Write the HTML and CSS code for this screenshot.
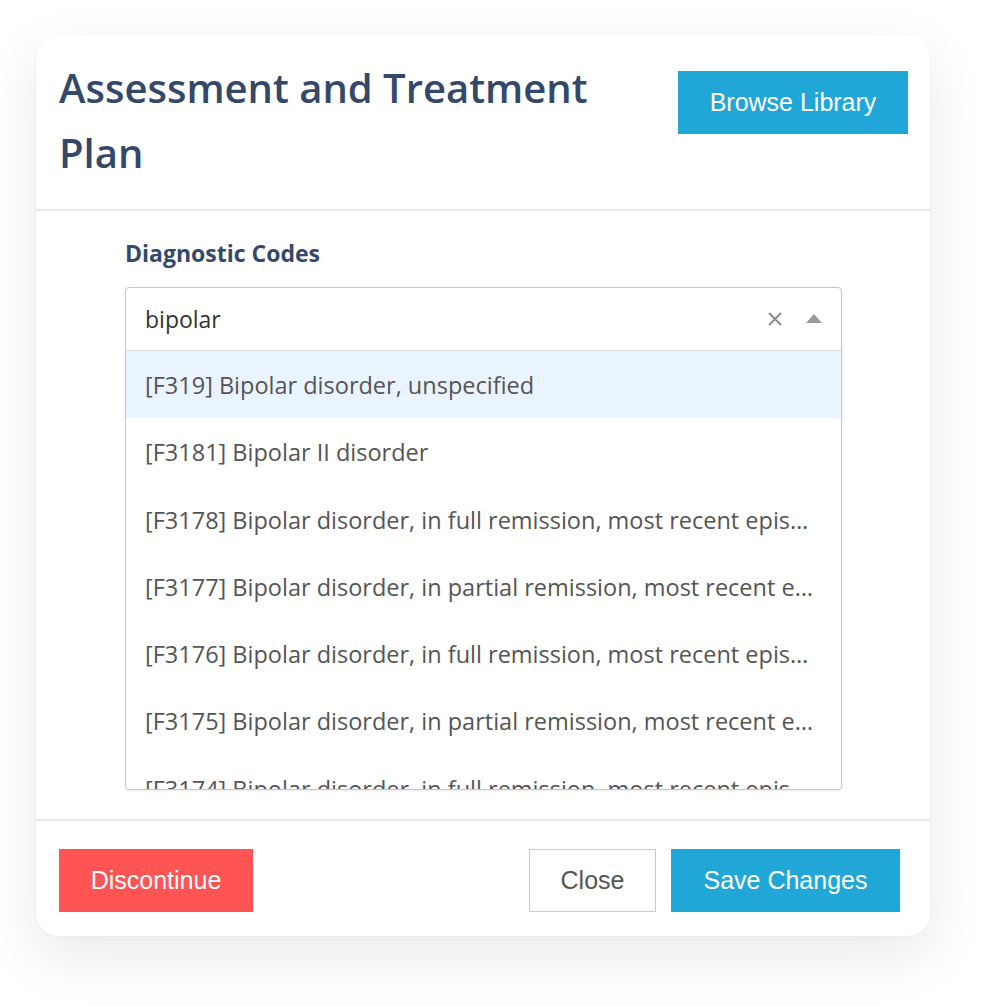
FILE: index.html
```html
<!DOCTYPE html>
<html lang="en">
<head>
  <meta charset="UTF-8">
  <title>Assessment and Treatment Plan</title>
  <link rel="stylesheet" href="styles.css">
</head>
<body>

  <div class="modal">
    <div class="modal-header">
      <h1 class="modal-title">Assessment and Treatment Plan</h1>
      <button class="btn btn-primary browse">Browse Library</button>
    </div>

    <div class="modal-body">
      <label class="field-label">Diagnostic Codes</label>
      <div class="select">
        <div class="select-input">
          <span class="query">bipolar</span>
          <span class="clear">
            <svg width="16" height="16" viewBox="0 0 16 16"><path d="M2 2 L14 14 M14 2 L2 14" stroke="#8a8a8a" stroke-width="1.8" fill="none"/></svg>
          </span>
          <span class="caret">
            <svg width="18" height="10" viewBox="0 0 18 10"><path d="M1 10 L9 1 L17 10 Z" fill="#9a9a9a"/></svg>
          </span>
        </div>
        <ul class="options">
          <li class="active">[F319] Bipolar disorder, unspecified</li>
          <li>[F3181] Bipolar II disorder</li>
          <li>[F3178] Bipolar disorder, in full remission, most recent episode mixed</li>
          <li>[F3177] Bipolar disorder, in partial remission, most recent episode mixed</li>
          <li>[F3176] Bipolar disorder, in full remission, most recent episode depressed</li>
          <li>[F3175] Bipolar disorder, in partial remission, most recent episode depressed</li>
          <li>[F3174] Bipolar disorder, in full remission, most recent episode manic</li>
        </ul>
      </div>
    </div>

    <div class="modal-footer">
      <button class="btn btn-danger">Discontinue</button>
      <div class="footer-right">
        <button class="btn btn-default">Close</button>
        <button class="btn btn-primary save">Save Changes</button>
      </div>
    </div>
  </div>

</body>
</html>
```

FILE: styles.css
```css
body {
  margin: 0;
  padding: 35px 0 71px 36px;
  background: #ffffff;
  font-family: "Open Sans", Arial, sans-serif;
}
.modal {
  width: 894px;
  background: #ffffff;
  border-radius: 22px;
  box-shadow: 0 20px 60px rgba(0, 0, 0, 0.09), 0 0 3px rgba(0, 0, 0, 0.05);
}
.modal-header {
  display: flex;
  justify-content: space-between;
  align-items: flex-start;
  padding: 20px 22px 24px 23px;
  border-bottom: 2px solid #e6eaf2;
}
.modal-title {
  margin: 0;
  width: 580px;
  font-size: 40px;
  font-weight: 600;
  line-height: 65px;
  color: #34486a;
}
.btn {
  height: 63px;
  border: none;
  font-family: "Liberation Sans", Arial, sans-serif;
  font-size: 25px;
  color: #ffffff;
  cursor: pointer;
}
.btn-primary {
  background: #20a7d8;
}
.browse {
  width: 230px;
  margin-top: 16px;
}
.btn-danger {
  width: 194px;
  background: #fe5454;
}
.btn-default {
  width: 127px;
  background: #ffffff;
  border: 1px solid #cacaca;
  color: #555555;
}
.save {
  width: 229px;
}
.modal-body {
  padding: 27px 88px 29px 89px;
}
.field-label {
  display: block;
  font-size: 23px;
  font-weight: 700;
  line-height: 30px;
  color: #34486a;
  margin-bottom: 19px;
}
.select {
  border: 1px solid #c6c6c6;
  border-radius: 4px;
  box-shadow: 0 1px 3px rgba(0, 0, 0, 0.08);
  overflow: hidden;
}
.select-input {
  display: flex;
  align-items: center;
  height: 62px;
  padding: 0 18px 0 19px;
  border-bottom: 1px solid #dddddd;
}
.query {
  flex: 1;
  font-size: 23px;
  color: #333333;
}
.clear {
  display: flex;
  margin-right: 22px;
}
.caret {
  display: flex;
  margin-top: -2px;
}
.options {
  list-style: none;
  margin: 0;
  padding: 0;
  height: 438px;
  overflow: hidden;
}
.options li {
  height: 67.3px;
  line-height: 69px;
  padding: 0 20px 0 19px;
  font-size: 23.5px;
  color: #555555;
  white-space: nowrap;
  overflow: hidden;
  text-overflow: ellipsis;
}
.options li.active {
  background: #eaf4fe;
}
.modal-footer {
  display: flex;
  justify-content: space-between;
  padding: 28px 30px 24px 23px;
  border-top: 2px solid #e6eaf2;
}
.footer-right {
  display: flex;
  gap: 15px;
}
```
